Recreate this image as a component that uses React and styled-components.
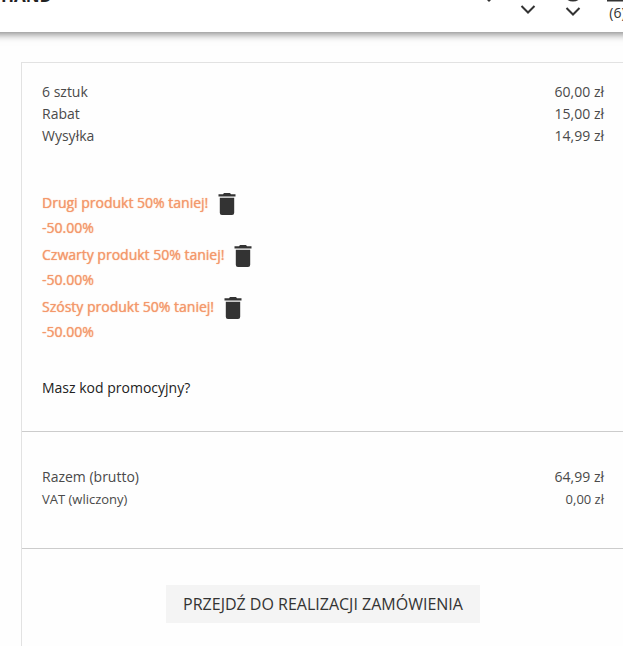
import React from "react";
import styled, { createGlobalStyle } from "styled-components";

const GlobalStyle = createGlobalStyle`
  body {
    margin: 0;
    overflow: hidden;
    background-color: #fefefe;
    color: #4a4a4a;
    font-family: "Open Sans", "Noto Sans", sans-serif;
    font-size: 14px;
    line-height: 22px;
  }
`;

const Header = styled.header`
  display: flex;
  align-items: flex-start;
  justify-content: space-between;
  height: 60px;
  margin: -28px -17px 0;
  background-color: white;
  box-shadow: 0 2px 8px rgba(0, 0, 0, 0.5);
`;

const Logo = styled.a`
  margin-left: 18px;
  color: #222;
  font-size: 17px;
  font-weight: 700;
  line-height: 48px;
  text-decoration: none;
`;

const HeaderNav = styled.nav`
  display: flex;
  flex-shrink: 0;
`;

const HeaderButton = styled.button`
  display: flex;
  flex-direction: column;
  align-items: center;
  gap: ${(props) => props.$gap || "0"};
  width: ${(props) => props.$width || "45px"};
  padding: 8px 0 0;
  border: none;
  background: none;
  color: #333;
  font: inherit;
  line-height: 18px;
`;

const Card = styled.main`
  margin: 30px -2px 0 21px;
  border: 1px solid #e2e2e2;
  background-color: #fefefe;
`;

const Section = styled.section`
  padding: ${(props) => props.$padding};
  border-bottom: ${(props) => (props.$last ? "none" : "1px solid #ccc")};
`;

const Summary = styled.dl`
  margin: 0;
`;

const SummaryRow = styled.div`
  display: flex;
  justify-content: space-between;
  font-size: ${(props) => (props.$small ? "13px" : "14px")};
`;

const Value = styled.dd`
  margin: 0;
`;

const Discounts = styled.ul`
  display: flex;
  flex-direction: column;
  gap: 4px;
  margin: 46px 0 0;
  padding: 0;
  list-style: none;
`;

const Discount = styled.li`
  color: #f4986b;
  text-shadow: 0 0 1px #f4986b;
  line-height: 26px;
`;

const DiscountName = styled.div`
  display: flex;
  align-items: flex-start;
  gap: 10px;
  line-height: 20px;
`;

const RemoveButton = styled.button`
  padding: 0;
  border: none;
  background: none;
  color: #333;

  svg {
    display: block;
  }
`;

const PromoButton = styled.button`
  display: block;
  margin-top: 32px;
  padding: 0;
  border: none;
  background: none;
  color: #222;
  font: inherit;
`;

const CheckoutButton = styled.button`
  display: block;
  margin: 0 auto;
  padding: 8px 17px;
  border: none;
  background-color: #f4f4f4;
  color: #333;
  font: inherit;
  font-size: 16px;
  text-transform: uppercase;
`;

const TrashIcon = () => (
  <svg width="18" height="22" viewBox="0 0 18 22" fill="currentColor">
    <path d="M5 1.2 6 0h6l1 1.2h4.5v2.3H.5V1.2zM1.8 4.8h14.4v15q0 2.2-2.2 2.2H4q-2.2 0-2.2-2.2z" />
  </svg>
);

const HeartIcon = () => (
  <svg width="24" height="24" viewBox="0 0 24 24" fill="currentColor">
    <path d="M12 22 3.5 13.5C-1 8 3 2.500 7.500 3c2 0 3.500 1 4.500 2.500C13 4 14.500 3 16.500 3 21 2.500 25 8 20.500 13.500z" />
  </svg>
);

const UserIcon = () => (
  <svg width="24" height="24" viewBox="0 0 24 24" fill="currentColor">
    <circle cx="12" cy="6" r="4" />
    <path d="M4 19v-2c0-3 5-4 8-4s8 1 8 4v2z" />
  </svg>
);

const GlobeIcon = () => (
  <svg width="24" height="24" viewBox="0 0 24 24" fill="none" stroke="currentColor" strokeWidth="3">
    <circle cx="12" cy="11" r="9" />
  </svg>
);

const BagIcon = () => (
  <svg width="24" height="24" viewBox="0 0 24 24" fill="none" stroke="currentColor" strokeWidth="2">
    <path d="M2 7h20v13.500H2zM8 7V3h8v4" />
  </svg>
);

const ChevronIcon = () => (
  <svg width="16" height="9" viewBox="0 0 16 9" fill="none" stroke="currentColor" strokeWidth="2">
    <path d="m1.500 1 6.500 6.500L14.500 1" />
  </svg>
);

const items = [
  { label: "6 sztuk", value: "60,00 zł" },
  { label: "Rabat", value: "15,00 zł" },
  { label: "Wysyłka", value: "14,99 zł" },
];

const totals = [
  { label: "Razem (brutto)", value: "64,99 zł" },
  { label: "VAT (wliczony)", value: "0,00 zł", small: true },
];

const discounts = [
  "Drugi produkt 50% taniej!",
  "Czwarty produkt 50% taniej!",
  "Szósty produkt 50% taniej!",
];

const Rows = ({ rows }) => (
  <Summary>
    {rows.map((row) => (
      <SummaryRow key={row.label} $small={row.small}>
        <dt>{row.label}</dt>
        <Value>{row.value}</Value>
      </SummaryRow>
    ))}
  </Summary>
);

const App = () => {
  return (
    <>
      <GlobalStyle />
      <Header>
        <Logo href="#">HAND</Logo>
        <HeaderNav>
          <HeaderButton $width="32px" aria-label="Ulubione">
            <HeartIcon />
          </HeaderButton>
          <HeaderButton $gap="1px" aria-label="Konto">
            <UserIcon />
            <ChevronIcon />
          </HeaderButton>
          <HeaderButton $gap="3px" aria-label="Język">
            <GlobeIcon />
            <ChevronIcon />
          </HeaderButton>
          <HeaderButton aria-label="Koszyk">
            <BagIcon />
            (6)
          </HeaderButton>
        </HeaderNav>
      </Header>
      <Card>
        <Section $padding="18px 20px 32px">
          <Rows rows={items} />
          <Discounts>
            {discounts.map((name) => (
              <Discount key={name}>
                <DiscountName>
                  {name}
                  <RemoveButton aria-label="Usuń">
                    <TrashIcon />
                  </RemoveButton>
                </DiscountName>
                -50.00%
              </Discount>
            ))}
          </Discounts>
          <PromoButton>Masz kod promocyjny?</PromoButton>
        </Section>
        <Section $padding="34px 20px 38px">
          <Rows rows={totals} />
        </Section>
        <Section $padding="36px 20px" $last>
          <CheckoutButton>Przejdź do realizacji zamówienia</CheckoutButton>
        </Section>
      </Card>
    </>
  );
};

export default App;
